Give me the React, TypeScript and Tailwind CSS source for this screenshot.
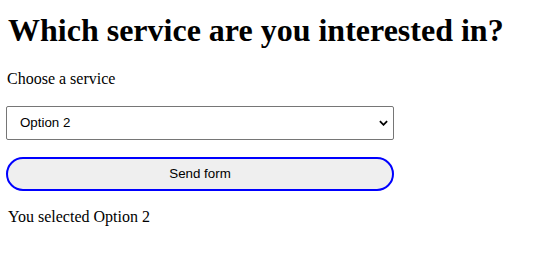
import { useState } from "react";

export default function App() {
  const [service, setService] = useState("Option 2");

  return (
    <div className="min-h-[256px] bg-white px-[8px] pt-[12px] text-black font-['Liberation_Serif',serif]">
      <h1 className="text-[32px] font-bold leading-[37px]">
        Which service are you interested in?
      </h1>

      <form
        className="mt-[21px] flex w-[388px] flex-col -ml-[2px]"
        onSubmit={(e) => e.preventDefault()}
      >
        <label
          htmlFor="service"
          className="ml-[1px] text-[16px] leading-[18px]"
        >
          Choose a service
        </label>

        {/* Select */}
        <div className="relative mt-[18px]">
          <select
            id="service"
            value={service}
            onChange={(e) => setService(e.target.value)}
            className="h-[34px] w-full appearance-none rounded-[2px] border border-[#767676] bg-white pl-[13px] pr-8 font-['Liberation_Sans',Arial,sans-serif] text-[13.33px] text-black outline-none"
          >
            <option>Option 1</option>
            <option>Option 2</option>
            <option>Option 3</option>
          </select>
          <svg
            viewBox="0 0 10 6"
            className="pointer-events-none absolute right-[6px] top-1/2 h-[6px] w-[9px] -translate-y-1/2"
          >
            <path
              d="M1 1 L5 5 L9 1"
              fill="none"
              stroke="#000"
              strokeWidth="2"
            />
          </svg>
        </div>

        {/* Button */}
        <button
          type="submit"
          className="mt-[17px] h-[34px] w-full rounded-full border-2 border-[#0000ff] bg-[#efefef] font-['Liberation_Sans',Arial,sans-serif] text-[13.33px] text-black"
        >
          Send form
        </button>
      </form>

      <p className="mt-[17px] text-[16px] leading-[18px]">
        You selected {service}
      </p>
    </div>
  );
}
